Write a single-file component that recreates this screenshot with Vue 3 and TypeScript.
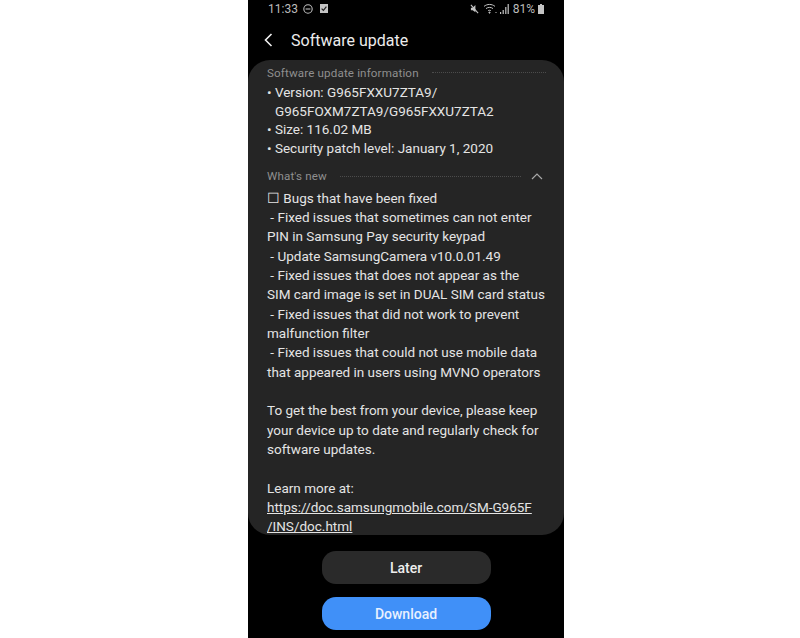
<script setup lang="ts">
interface InfoLine {
  text: string
  indent: boolean
}
const infoLines: InfoLine[] = [
  { text: '• Version: G965FXXU7ZTA9/', indent: false },
  { text: 'G965FOXM7ZTA9/G965FXXU7ZTA2', indent: true },
  { text: '• Size: 116.02 MB', indent: false },
  { text: '• Security patch level: January 1, 2020', indent: false },
]
const newLines: string[] = [
  ' - Fixed issues that sometimes can not enter',
  'PIN in Samsung Pay security keypad',
  ' - Update SamsungCamera v10.0.01.49',
  ' - Fixed issues that does not appear as the',
  'SIM card image is set in DUAL SIM card status',
  ' - Fixed issues that did not work to prevent',
  'malfunction filter',
  ' - Fixed issues that could not use mobile data',
  'that appeared in users using MVNO operators',
  '\u00a0',
  'To get the best from your device, please keep',
  'your device up to date and regularly check for',
  'software updates.',
  '\u00a0',
  'Learn more at:',
]
</script>

<template>
  <div class="page">
    <div class="phone">
      <div class="status">
        <div class="status-side left">
          <span class="status-text">11:33</span>
          <svg width="10" height="10" viewBox="0 0 10 10" fill="none" stroke="#bdbdbd" stroke-width="1.1">
            <circle cx="5" cy="5" r="4.2" />
            <path d="M2.6 5h4.8" />
          </svg>
          <svg class="check" width="8" height="9" viewBox="0 0 8 9">
            <path d="M0 0h8v9H0z" fill="#c4c4c4" />
            <path d="M1.6 4.6l1.8 1.8 3-3.8" fill="none" stroke="#222" stroke-width="1.2" />
          </svg>
        </div>
        <div class="status-side">
          <svg width="9" height="10" viewBox="0 0 10 11">
            <path d="M1 4h2l3-3v8L3 7H1z" fill="#c4c4c4" />
            <path d="M1 1l8 9" stroke="#c4c4c4" stroke-width="1.2" />
          </svg>
          <svg class="wifi" width="14" height="11" viewBox="0 0 14 11" fill="none" stroke="#c4c4c4" stroke-width="1">
            <path d="M1 3.4C4 .8 9 .8 12 3.4" />
            <path d="M3 5.6c2-1.6 5-1.6 7 0" />
            <path d="M5 7.8c1-.7 2-.7 3 0" />
            <circle cx="6.5" cy="9.6" r=".6" fill="#c4c4c4" />
            <path d="M13 9v1" />
          </svg>
          <svg class="signal" width="9" height="10" viewBox="0 0 9 10" fill="#c4c4c4">
            <rect x="0" y="8" width="1.2" height="2" />
            <rect x="2.6" y="6" width="1.2" height="4" />
            <rect x="5.2" y="3" width="1.2" height="7" />
            <rect x="7.6" y="0" width="1.2" height="10" />
          </svg>
          <span class="status-text pct">81%</span>
          <svg class="battery" width="6" height="10" viewBox="0 0 6 10" fill="#c4c4c4">
            <path d="M2 0h2v1h2v9H0V1h2z" />
          </svg>
        </div>
      </div>

      <header class="bar">
        <svg width="9" height="14" viewBox="0 0 9 14" fill="none" stroke="#f0f0f0" stroke-width="1.6">
          <path d="M7.5 1L1.5 7l6 6" />
        </svg>
        <h1 class="title">Software update</h1>
      </header>

      <main class="card">
        <div class="section-head first">
          <span class="section-label">Software update information</span>
          <span class="dots"></span>
        </div>
        <div class="lines">
          <div
            v-for="line in infoLines"
            :key="line.text"
            class="line info"
            :class="{ indent: line.indent }"
          >{{ line.text }}</div>
        </div>

        <div class="section-head second">
          <span class="section-label">What's new</span>
          <span class="dots"></span>
          <svg class="chev" width="12" height="7" viewBox="0 0 12 7" fill="none" stroke="#a8a8a8" stroke-width="1.2">
            <path d="M1 6l5-5 5 5" />
          </svg>
        </div>
        <div class="lines">
          <div class="line">☐ Bugs that have been fixed</div>
          <div v-for="(line, i) in newLines" :key="i" class="line">{{ line }}</div>
          <div class="line"><span class="link">https://doc.samsungmobile.com/SM-G965F</span></div>
          <div class="line"><span class="link">/INS/doc.html</span></div>
        </div>
      </main>

      <div class="actions">
        <button class="btn later" type="button">Later</button>
        <button class="btn download" type="button">Download</button>
      </div>
    </div>
  </div>
</template>

<style>
html, body { margin: 0; background: #fff; }
</style>

<style scoped>
.page {
  width: 800px;
  height: 638px;
  display: flex;
  justify-content: flex-start;
  background: #fff;
  overflow: hidden;
  font-family: Roboto, "Liberation Sans", sans-serif;
}
.phone {
  width: 316px;
  margin-left: 248px;
  height: 638px;
  background: #000;
  display: flex;
  flex-direction: column;
}
.status {
  height: 17px;
  padding: 0 20px 0 20px;
  display: flex;
  justify-content: space-between;
  align-items: center;
}
.status-side { display: flex; align-items: center; gap: 6px; }
.status-side.left { gap: 5px; }
.status-text { font-size: 12px; color: #bcbcbc; }
.check { margin-left: 2px; }
.wifi { margin-left: -2px; }
.signal { margin-left: -3px; }
.pct { margin-left: -2px; }
.battery { margin-left: -3px; }
.bar {
  height: 43px;
  padding: 3px 0 0 16px;
  box-sizing: border-box;
  display: flex;
  align-items: center;
  gap: 18px;
}
.title {
  margin: 0;
  font-size: 16px;
  font-weight: 400;
  color: #ececec;
}
.card {
  height: 475px;
  box-sizing: border-box;
  padding: 5px 18px 0 19px;
  background: #252525;
  border-radius: 22px;
}
.section-head { display: flex; align-items: center; height: 15px; }
.section-head.second { margin-top: 10.7px; margin-bottom: 5px; }
.section-head.first { margin-bottom: 3px; }
.section-label {
  font-size: 11.6px;
  color: #8f8f8f;
  letter-spacing: 0.15px;
  white-space: nowrap;
}
.dots {
  flex: 1;
  margin-left: 13px;
  border-top: 1px dotted #4c4c4c;
}
.chev { margin-left: 10px; margin-right: 3px; }
.line {
  font-size: 13.5px;
  line-height: 19.35px;
  color: #e4e4e4;
  white-space: pre;
}
.line.info { line-height: 18.7px; }
.line.indent { padding-left: 8px; }
.link { text-decoration: underline; }
.actions {
  flex: 1;
  display: flex;
  flex-direction: column;
  align-items: center;
  padding-top: 16px;
  gap: 13px;
}
.btn {
  width: 169px;
  height: 33px;
  border: none;
  border-radius: 14px;
  font-family: inherit;
  font-size: 14px;
  font-weight: 500;
  padding: 0;
}
.later { background: #2a2a2a; color: #eeeeee; }
.download { background: #4090f8; color: #e8f1ff; }
</style>
